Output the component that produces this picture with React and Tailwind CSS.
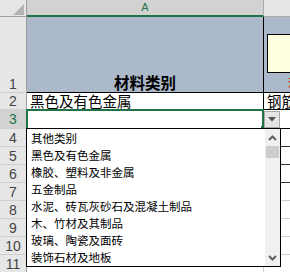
import React from "react";

const cjk = { fontFamily: '"Noto Sans CJK SC", "Noto Sans", sans-serif' };
const num = { fontFamily: '"Liberation Sans", Arial, sans-serif' };

const items = [
  "其他类别",
  "黑色及有色金属",
  "橡胶、塑料及非金属",
  "五金制品",
  "水泥、砖瓦灰砂石及混凝土制品",
  "木、竹材及其制品",
  "玻璃、陶瓷及面砖",
  "装饰石材及地板",
];

function RowHead({ n, selected, className = "" }) {
  return (
    <div
      style={num}
      className={
        "w-[27px] shrink-0 flex justify-center border-r border-b border-r-[#9e9e9e] border-b-[#cfcfcf] text-[14px] leading-none " +
        (selected ? "bg-[#d2d2d2] text-[#217346] " : "bg-[#e6e6e6] text-[#444] ") +
        className
      }
    >
      {n}
    </div>
  );
}

function Chevron({ up }) {
  return (
    <svg width="9" height="6" viewBox="0 0 9 6">
      <polyline
        points={up ? "1,5 4.5,1.5 8,5" : "1,1 4.5,4.5 8,1"}
        fill="none"
        stroke="#606060"
        strokeWidth="2"
      />
    </svg>
  );
}

export default function App() {
  const lower = [4, 5, 6, 7, 8, 9, 10, 11];
  return (
    <div className="relative w-[290px] h-[272px] overflow-hidden bg-white" style={cjk}>
      {/* column headers */}
      <div className="flex h-[17px]">
        <div className="w-[27px] shrink-0 bg-[#e6e6e6] border-r border-b border-[#9e9e9e] relative">
          <svg className="absolute left-[13px] top-[4px]" width="11" height="11" viewBox="0 0 11 11">
            <polygon points="11,0 11,11 0,11" fill="#b4b4b4" />
          </svg>
        </div>
        <div
          style={num}
          className="w-[237px] shrink-0 bg-[#d2d2d2] border-b-2 border-[#217346] border-r border-r-[#ababab] flex justify-center text-[11px] text-[#217346] leading-[14px]"
        >
          A
        </div>
        <div className="flex-1 bg-[#e6e6e6] border-b border-[#ababab]" />
      </div>

      {/* row 1 */}
      <div className="flex h-[76px]">
        <RowHead n={1} className="items-end pb-[1px]" />
        <div className="w-[237px] shrink-0 bg-[#acb9ca] border-r border-b border-black flex items-end justify-center">
          <span className="text-[15.5px] font-bold text-black leading-[18px] mb-[1px]">材料类别</span>
        </div>
        <div className="flex-1 bg-[#acb9ca] border-b border-black flex flex-col">
          <div className="mt-[17px] ml-[3px] h-[39px] bg-[#ffffe1] border border-black" />
          <div className="ml-[24px] mt-[5px] text-[10px] leading-[10px] text-[#e00000]">注</div>
        </div>
      </div>

      {/* row 2 */}
      <div className="flex h-[17px]">
        <RowHead n={2} className="items-center" />
        <div className="w-[237px] shrink-0 border-r border-b border-black flex items-end pl-[3px]">
          <span className="text-[14.5px] leading-[16px] text-black">黑色及有色金属</span>
        </div>
        <div className="flex-1 border-b border-black flex items-end pl-[3px] overflow-hidden whitespace-nowrap">
          <span className="text-[14.5px] leading-[16px] text-black">钢筋</span>
        </div>
      </div>

      {/* row 3 */}
      <div className="flex h-[19px]">
        <RowHead n={3} selected className="items-center" />
        <div className="w-[237px] shrink-0 border-r border-b border-black" />
        <div className="flex-1 border-b border-black" />
      </div>

      {/* rows 4 - 11 */}
      {lower.map((n) => (
        <div key={n} className="flex h-[18px]">
          <RowHead n={n} className="items-center" />
          <div className="w-[237px] shrink-0 border-r border-b border-[#d4d4d4]" />
          <div className={"flex-1 border-b " + (n <= 6 ? "border-[#333]" : "border-[#cfcfcf]")} />
        </div>
      ))}

      {/* selection frame */}
      <div className="absolute left-[26px] top-[109px] w-[238px] h-[21px] border-2 border-[#217346]" />
      <div className="absolute left-[261px] top-[126px] w-[4px] h-[4px] bg-[#217346]" />

      {/* dropdown button */}
      <div className="absolute left-[264px] top-[111px] w-[16px] h-[17px] bg-[#e4e4e4] border border-[#a8a8a8] flex items-center justify-center">
        <svg width="8" height="5" viewBox="0 0 8 5">
          <polygon points="0,0 8,0 4,4.5" fill="#505050" />
        </svg>
      </div>

      {/* dropdown list */}
      <div className="absolute left-[26px] top-[128px] w-[255px] h-[139px] bg-white border border-black flex">
        <div className="flex-1 flex flex-col pt-[1px] overflow-hidden">
          {items.map((t) => (
            <div key={t} className="h-[17px] leading-[17px] pl-[4px] text-[11.5px] text-black whitespace-nowrap">
              {t}
            </div>
          ))}
        </div>
        <div className="w-[15px] bg-[#f0f0f0] flex flex-col items-center">
          <div className="h-[17px] flex items-center justify-center">
            <Chevron up />
          </div>
          <div className="w-[13px] h-[12px] bg-[#cdcdcd]" />
          <div className="flex-1" />
          <div className="h-[17px] flex items-center justify-center">
            <Chevron />
          </div>
        </div>
      </div>
    </div>
  );
}
